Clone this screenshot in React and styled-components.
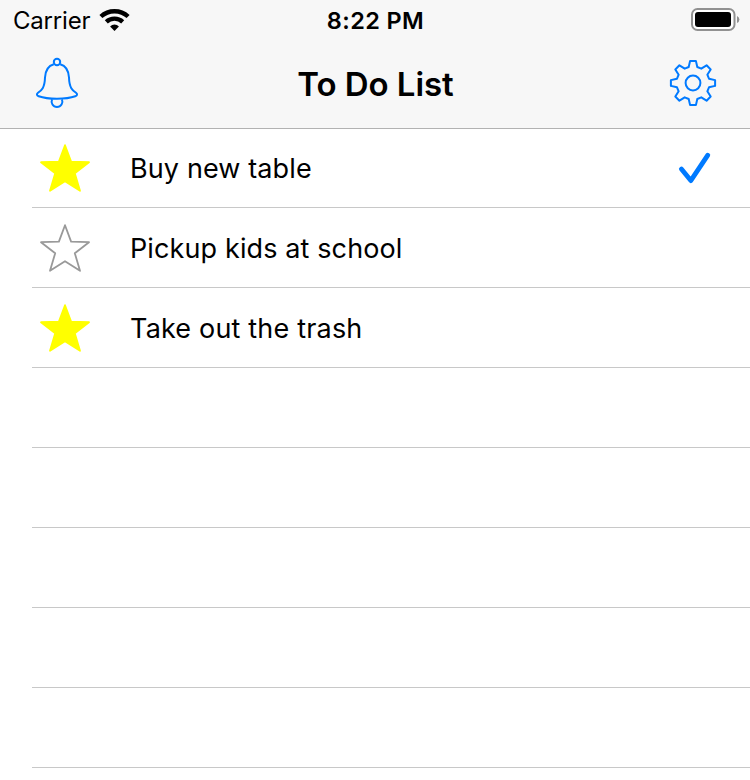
import React from "react";
import styled, { createGlobalStyle } from "styled-components";

const GlobalStyle = createGlobalStyle`
  * { box-sizing: border-box; }
  body {
    margin: 0;
    background: #fff;
    color: #000;
    font-family: Inter, "Liberation Sans", sans-serif;
    overflow: hidden;
  }
  svg { display: block; }
`;

const Screen = styled.main`
  width: 750px;
  height: 780px;
  overflow: hidden;
  background: #fff;
`;

const Header = styled.header`
  height: 129px;
  background: #f7f7f7;
  border-bottom: 1px solid #b2b2b2;
`;

const StatusBar = styled.div`
  display: grid;
  grid-template-columns: 1fr auto 1fr;
  align-items: center;
  height: 40px;
  padding: 0 11px 0 13px;
`;

const CarrierGroup = styled.div`
  display: flex;
  align-items: center;
  gap: 9px;
`;

const Carrier = styled.span`
  width: 77px;
  padding-top: 2px;
  font-size: 24px;
  line-height: 38px;
  letter-spacing: -0.2px;
  white-space: nowrap;
`;

const Clock = styled.span`
  padding-top: 2px;
  margin-left: -1px;
  font-size: 23.5px;
  font-weight: 600;
  line-height: 38px;
  letter-spacing: 0.4px;
`;

const BatterySlot = styled.div`
  justify-self: end;
  margin-right: -1px;
`;

const NavBar = styled.nav`
  display: grid;
  grid-template-columns: 1fr auto 1fr;
  align-items: center;
  height: 88px;
  padding: 0 32px;
`;

const NavButton = styled.button`
  justify-self: ${({ $side }) => $side};
  width: 50px;
  height: 60px;
  padding: 0;
  border: 0;
  background: none;
  color: #007aff;
`;

const Title = styled.h1`
  margin: 0;
  padding-left: 1px;
  font-size: 33px;
  font-weight: 600;
  line-height: 88px;
  letter-spacing: -0.05px;
`;

const List = styled.ul`
  margin: 0;
  padding: 0 0 0 32px;
  list-style: none;
`;

const Row = styled.li`
  display: flex;
  align-items: center;
  height: 80px;
  padding: 0 38px 0 6px;
  border-bottom: 1px solid #c8c8c8;

  &:first-child { height: 79px; }
`;

const Label = styled.span`
  flex: 1;
  padding: 2px 0 0 38px;
  font-size: 27px;
  line-height: 40px;
  letter-spacing: ${({ $tracking }) => $tracking}px;
`;

function WifiIcon() {
  return (
    <svg width="31" height="24" viewBox="0 0 31 24" fill="none" stroke="#000" strokeWidth="4.4">
      <path d="M1.9 8.5C9.5 1.4 21.5 1.4 29.1 8.5" />
      <path d="M7.3 13.8C11.8 9.6 19.2 9.6 23.7 13.8" />
      <path d="M15.5 23L11.1 18.6C13.5 15.9 17.5 15.9 19.9 18.6Z" fill="#000" stroke="none" />
    </svg>
  );
}

function BatteryIcon() {
  return (
    <svg width="49" height="24" viewBox="0 0 49 24">
      <rect x="1" y="1" width="42.5" height="21" rx="5.5" fill="#fff" stroke="#919191" strokeWidth="2" />
      <rect x="4" y="4" width="36" height="15" rx="3" />
      <path d="M46 8Q48.4 9 48.4 11.5T46 15Z" fill="#919191" />
    </svg>
  );
}

function BellIcon() {
  return (
    <svg width="50" height="60" viewBox="32 54 50 60" fill="none" stroke="currentColor" strokeWidth="2">
      <circle cx="57" cy="62" r="3.2" />
      <path d="M53.8 64.2C47.5 66 45.3 72 45 77.5C44.7 88 41.5 90.3 38 92.8C36.2 94.3 36.8 95.6 38.7 96.3C48 99.6 66 99.6 75.3 96.3C77.2 95.6 77.8 94.3 76 92.8C72.5 90.3 69.3 88 69 77.5C68.7 72 66.5 66 60.2 64.2" />
      <path d="M52.1 99.3A5.4 5.4 0 1 0 61.9 99.3" />
    </svg>
  );
}

const GEAR_TOOTH = [[-4.3, -16], [-2.9, -22.1], [2.9, -22.1], [4.3, -16]];
const GEAR_POINTS = Array.from({ length: 8 }, (_, i) => {
  const angle = (i * Math.PI) / 4;
  return GEAR_TOOTH.map(([x, y]) => [
    x * Math.cos(angle) - y * Math.sin(angle),
    x * Math.sin(angle) + y * Math.cos(angle),
  ].map((n) => n.toFixed(2)).join(","));
}).flat().join(" ");

function GearIcon() {
  return (
    <svg width="50" height="60" viewBox="-25 -29 50 60" fill="none" stroke="currentColor" strokeWidth="2" strokeLinejoin="round">
      <polygon points={GEAR_POINTS} />
      <circle r="7.4" />
    </svg>
  );
}

function StarIcon({ filled }) {
  return (
    <svg width="54" height="54" viewBox="38 141 54 54" fill={filled ? "#ff0" : "none"} stroke={filled ? "#ff0" : "#999"} strokeWidth="1.8" strokeLinejoin="round">
      <path d="M65 145.2L71.1 161.6L89 162.2L74.8 173.2L80 190.8L65 181.2L50 190.8L55.2 173.2L41 162.2L58.9 161.6Z" />
    </svg>
  );
}

function CheckIcon() {
  return (
    <svg width="34" height="34" viewBox="678 151 34 34" fill="none" stroke="#007aff" strokeWidth="4.8" strokeLinecap="round" strokeLinejoin="round">
      <path d="M681.4 169L690.8 180.6L707.8 155.2" />
    </svg>
  );
}

const ITEMS = [
  { text: "Buy new table", starred: true, done: true, tracking: 0.12 },
  { text: "Pickup kids at school", starred: false, done: false, tracking: 0.12 },
  { text: "Take out the trash", starred: true, done: false, tracking: 0.18 },
];

const EMPTY_ROWS = [0, 1, 2, 3, 4];

export default function App() {
  return (
    <>
      <GlobalStyle />
      <Screen>
        <Header>
          <StatusBar>
            <CarrierGroup>
              <Carrier>Carrier</Carrier>
              <WifiIcon />
            </CarrierGroup>
            <Clock>8:22 PM</Clock>
            <BatterySlot><BatteryIcon /></BatterySlot>
          </StatusBar>
          <NavBar>
            <NavButton $side="start" aria-label="Reminders"><BellIcon /></NavButton>
            <Title>To Do List</Title>
            <NavButton $side="end" aria-label="Settings"><GearIcon /></NavButton>
          </NavBar>
        </Header>
        <List>
          {ITEMS.map((item) => (
            <Row key={item.text}>
              <StarIcon filled={item.starred} />
              <Label $tracking={item.tracking}>{item.text}</Label>
              {item.done && <CheckIcon />}
            </Row>
          ))}
          {EMPTY_ROWS.map((n) => <Row key={n} />)}
        </List>
      </Screen>
    </>
  );
}
